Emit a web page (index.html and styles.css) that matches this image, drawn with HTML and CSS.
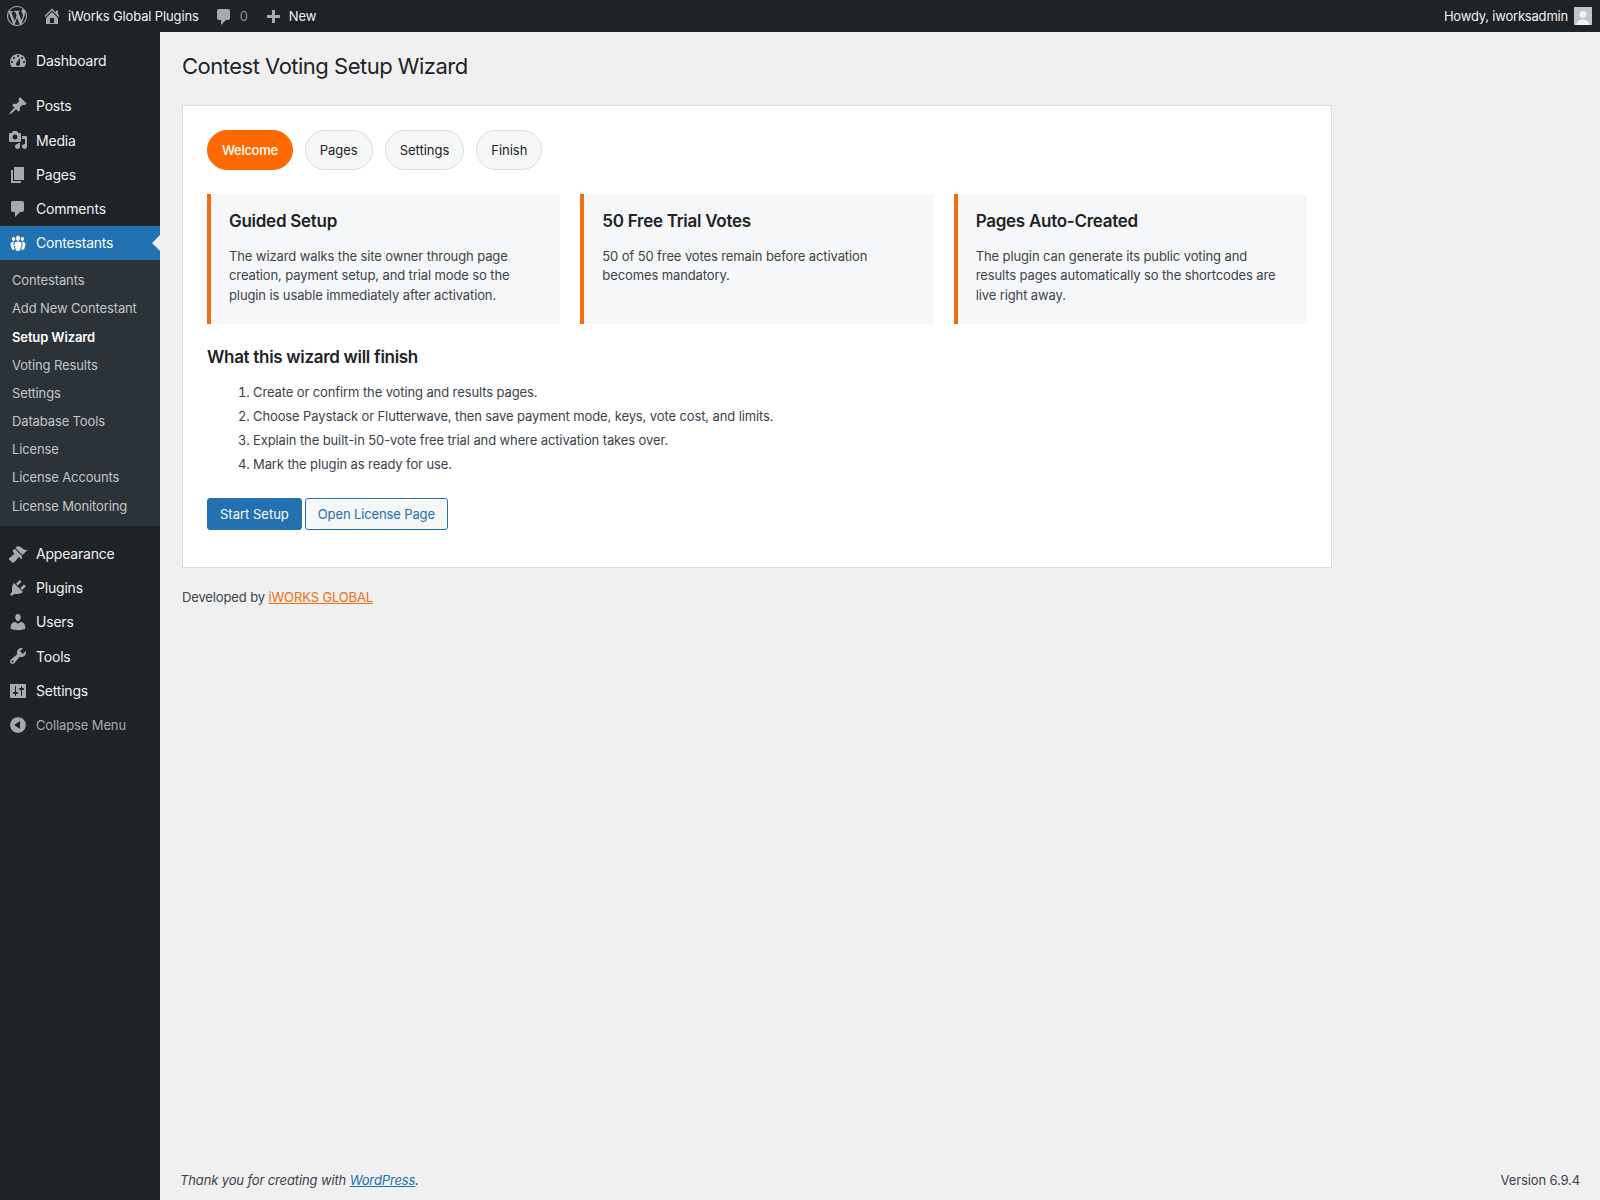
FILE: index.html
```html
<!DOCTYPE html>
<html lang="en">
<head>
<meta charset="utf-8">
<title>Contest Voting Setup Wizard</title>
<link rel="stylesheet" href="styles.css">
</head>
<body>
<header class="adminbar">
  <svg class="bar-logo" viewBox="0 0 20 20"><path fill-rule="evenodd" d="M20 10c0-5.51-4.49-10-10-10C4.48 0 0 4.49 0 10c0 5.52 4.48 10 10 10 5.51 0 10-4.48 10-10zM7.78 15.37L4.37 6.22c.55-.02 1.17-.08 1.17-.08.5-.06.44-1.13-.06-1.11 0 0-1.45.11-2.37.11-.18 0-.37 0-.58-.01C4.12 2.69 6.87 1.11 10 1.11c2.33 0 4.45.87 6.05 2.34-.68-.11-1.65.39-1.65 1.58 0 .74.45 1.36.9 2.1.35.61.55 1.36.55 2.46 0 1.49-1.4 5-1.4 5l-3.03-8.37c.54-.02.82-.17.82-.17.5-.05.44-1.25-.06-1.22 0 0-1.44.12-2.38.12-.87 0-2.33-.12-2.33-.12-.5-.03-.56 1.2-.06 1.22l.92.08 1.26 3.41zM17.41 10c.24-.64.74-1.87.43-4.25.7 1.29 1.05 2.71 1.05 4.25 0 3.29-1.73 6.24-4.4 7.78.97-2.59 1.94-5.2 2.92-7.78zM6.1 18.09C3.12 16.65 1.11 13.53 1.11 10c0-1.3.23-2.48.72-3.59C3.25 10.3 4.67 14.2 6.1 18.09zm4.03-6.63l2.58 6.98c-.86.29-1.76.45-2.71.45-.79 0-1.57-.11-2.29-.33.81-2.38 1.62-4.74 2.42-7.1z"/></svg>
  <svg class="bar-home" viewBox="0 0 20 20"><path fill-rule="evenodd" d="M16 8.5l1.53 1.53-1.06 1.06L10 4.62l-6.47 6.47-1.06-1.06L10 2.5l4 4v-2h2v4zm-6-2.46l6 5.99V18H4v-5.97zM12 17v-5H8v5h4z"/></svg>
  <span class="bar-site">iWorks Global Plugins</span>
  <svg class="bar-comment" viewBox="0 0 20 20"><path d="M5 2h9c1.1 0 2 .9 2 2v7c0 1.1-.9 2-2 2h-2l-5 5v-5H5c-1.100 0-2-.9-2-2V4c0-1.100.9-2 2-2z"/></svg>
  <span class="bar-count">0</span>
  <svg class="bar-plus" viewBox="0 0 20 20"><path d="M17 7v3h-5v5H9v-5H4V7h5V2h3v5h5z"/></svg>
  <span class="bar-new">New</span>
  <span class="bar-howdy">Howdy, iworksadmin</span>
  <span class="avatar"><svg viewBox="0 0 18 18"><rect width="18" height="18" fill="#c4c5c7"/><circle cx="9" cy="7.500" r="3.400" fill="#f3f3f3"/><path d="M2.500 18c.4-4 3-5.500 6.500-5.500s6.100 1.500 6.500 5.500z" fill="#f3f3f3"/></svg></span>
</header>

<div class="shell">
  <nav class="sidemenu">
    <ul class="menu">
      <li class="item"><svg class="mi" viewBox="0 0 20 20"><path fill-rule="evenodd" d="M3.760 16h12.480c1.100-1.370 1.760-3.110 1.760-5 0-4.420-3.580-8-8-8s-8 3.580-8 8c0 1.890.66 3.630 1.760 5zM10 4c.55 0 1 .45 1 1s-.45 1-1 1-1-.45-1-1 .45-1 1-1zM6 6c.55 0 1 .45 1 1s-.45 1-1 1-1-.45-1-1 .45-1 1-1zm8 0c.55 0 1 .45 1 1s-.45 1-1 1-1-.45-1-1 .45-1 1-1zm-5.370 5.550L12 7v6c0 1.100-.9 2-2 2s-2-.9-2-2c0-.57.24-1.080.63-1.450zM4 10c.55 0 1 .45 1 1s-.45 1-1 1-1-.45-1-1 .45-1 1-1zm12 0c.55 0 1 .45 1 1s-.45 1-1 1-1-.45-1-1 .45-1 1-1z"/></svg><span>Dashboard</span></li>
      <li class="sep"></li>
      <li class="item"><svg class="mi" viewBox="0 0 20 20"><path d="M10.440 3.020l1.820-1.820 6.360 6.350-1.830 1.820c-1.050-.68-2.480-.57-3.410.36l-.75.75c-.92.93-1.040 2.350-.35 3.410l-1.830 1.820-2.410-2.410-2.800 2.790c-.42.42-3.380 2.710-3.800 2.290s1.860-3.390 2.280-3.810l2.790-2.790L4.100 9.360l1.830-1.820c1.050.69 2.480.57 3.400-.36l.75-.75c.93-.92 1.050-2.350.36-3.410z"/></svg><span>Posts</span></li>
      <li class="item"><svg class="mi" viewBox="0 0 20 20"><path fill-rule="evenodd" d="M13 11V4c0-.55-.45-1-1-1h-1.670L9 1H5L3.670 3H2c-.55 0-1 .45-1 1v7c0 .55.45 1 1 1h10c.55 0 1-.45 1-1zM7 4.500c1.380 0 2.500 1.120 2.500 2.500S8.380 9.500 7 9.500 4.500 8.380 4.500 7 5.620 4.500 7 4.500zM14 6h5v10.500c0 1.380-1.120 2.500-2.500 2.500S14 17.880 14 16.500s1.120-2.500 2.500-2.500c.17 0 .34.02.5.05V9h-3V6zm-4 8.050V13h2v3.500c0 1.380-1.120 2.500-2.500 2.500S7 17.880 7 16.500 8.120 14 9.500 14c.17 0 .34.02.5.05z"/></svg><span>Media</span></li>
      <li class="item"><svg class="mi" viewBox="0 0 20 20"><path d="M6 15V2h10v13H6zm-1 1h8v2H3V5h2v11z"/></svg><span>Pages</span></li>
      <li class="item"><svg class="mi" viewBox="0 0 20 20"><path d="M5 2h9c1.100 0 2 .9 2 2v7c0 1.100-.9 2-2 2h-2l-5 5v-5H5c-1.100 0-2-.9-2-2V4c0-1.100.9-2 2-2z"/></svg><span>Comments</span></li>
      <li class="item current"><svg class="mi" viewBox="0 0 20 20"><path d="M8.030 4.460c-.29 1.280.55 3.460 1.970 3.460 1.410 0 2.250-2.180 1.960-3.460-.22-.98-1.080-1.630-1.960-1.630-.89 0-1.740.65-1.970 1.630zm-4.130.9c-.25 1.080.47 2.930 1.670 2.930s1.920-1.850 1.670-2.930c-.19-.83-.92-1.390-1.670-1.390s-1.480.56-1.670 1.390zm8.860 0c-.25 1.080.47 2.930 1.660 2.930 1.200 0 1.920-1.850 1.670-2.930-.19-.83-.92-1.390-1.670-1.390-.74 0-1.470.56-1.660 1.390zm-.59 11.430l1.250-4.300C14.200 10 12.710 8.470 10 8.470c-2.720 0-4.210 1.530-3.440 4.020l1.260 4.300C8.050 17.510 9 18 10 18c.98 0 1.940-.49 2.170-1.210zm-6.100-7.630c-.49.67-.96 1.830-.42 3.590l1.120 3.790c-.34.2-.77.31-1.200.31-.85 0-1.650-.41-1.850-1.030l-1.070-3.650c-.65-2.110.61-3.400 2.920-3.400.27 0 .54.02.79.06-.1.1-.2.22-.29.33zm8.350-.39c2.310 0 3.580 1.290 2.920 3.400l-1.070 3.650c-.2.62-1 1.030-1.850 1.030-.43 0-.86-.11-1.200-.31l1.110-3.770c.55-1.780.08-2.940-.42-3.610-.08-.11-.18-.23-.28-.33.25-.04.51-.06.79-.06z"/></svg><span>Contestants</span></li>
      <li class="submenu">
        <a>Contestants</a>
        <a>Add New Contestant</a>
        <a class="on">Setup Wizard</a>
        <a>Voting Results</a>
        <a>Settings</a>
        <a>Database Tools</a>
        <a>License</a>
        <a>License Accounts</a>
        <a>License Monitoring</a>
      </li>
      <li class="sep"></li>
      <li class="item"><svg class="mi" viewBox="0 0 20 20"><path d="M14.480 11.060L7.410 3.990l1.500-1.500c.5-.56 2.300-.47 3.510.32 1.210.8 1.430 1.280 2.910 2.100 1.180.64 2.450 1.260 4.450.85zm-.71.71L6.700 4.700 4.930 6.470c-.39.39-.39 1.020 0 1.410l1.060 1.060c.39.39.39 1.030 0 1.420-.6.6-1.430 1.110-2.210 1.690-.35.26-.7.53-1.010.84C1.430 13.230.4 14.800 1.010 15.410l3.170 3.170c.61.61 2.170-.41 3.520-1.760.31-.31.58-.66.84-1.010.58-.78 1.090-1.610 1.690-2.210.39-.39 1.020-.39 1.410 0l1.060 1.060c.39.39 1.020.39 1.410 0z"/></svg><span>Appearance</span></li>
      <li class="item"><svg class="mi" viewBox="0 0 20 20"><path d="M13.110 4.360L9.870 7.600 8 5.730l3.240-3.240c.35-.34 1.050-.2 1.560.32.52.51.66 1.210.31 1.550zm-8 1.770l.91-1.120 9.010 9.010-1.190.84c-.71.71-2.630 1.160-3.820 1.160H6.140L4.900 17.260c-.59.59-1.540.59-2.120 0-.59-.58-.59-1.530 0-2.120l1.240-1.240v-3.880c0-1.130.4-3.190 1.090-3.890zm7.260 3.970l3.240-3.240c.34-.35 1.040-.21 1.550.31.52.51.66 1.210.31 1.550l-3.240 3.250z"/></svg><span>Plugins</span></li>
      <li class="item"><svg class="mi" viewBox="0 0 20 20"><path d="M10 9.250c-2.270 0-2.730-3.440-2.730-3.440C7 4.020 7.820 2 9.970 2c2.160 0 2.980 2.020 2.710 3.810 0 0-.41 3.440-2.680 3.440zm0 2.570L12.720 10c2.390 0 4.520 2.330 4.520 4.530v2.490s-3.650 1.130-7.240 1.130c-3.650 0-7.240-1.130-7.240-1.130v-2.490c0-2.250 1.940-4.480 4.470-4.480z"/></svg><span>Users</span></li>
      <li class="item"><svg class="mi" viewBox="0 0 20 20"><path fill-rule="evenodd" d="M16.680 9.770c-1.340 1.340-3.300 1.670-4.950.99l-5.410 6.520c-.99.99-2.590.99-3.580 0s-.99-2.590 0-3.570l6.520-5.420c-.68-1.650-.35-3.610.99-4.950 1.280-1.280 3.120-1.620 4.720-1.060l-2.890 2.890 2.820 2.820 2.860-2.870c.53 1.580.18 3.390-1.080 4.690zM3.810 16.210c.4.39 1.040.39 1.430 0 .4-.4.4-1.040 0-1.430-.39-.4-1.030-.4-1.430 0-.39.39-.39 1.030 0 1.430z"/></svg><span>Tools</span></li>
      <li class="item"><svg class="mi" viewBox="0 0 20 20"><path fill-rule="evenodd" d="M18 16V4c0-.55-.45-1-1-1H3c-.55 0-1 .45-1 1v12c0 .55.45 1 1 1h14c.55 0 1-.45 1-1zM8 11h1c.55 0 1 .45 1 1s-.45 1-1 1H8v1.500c0 .28-.22.5-.5.5s-.5-.22-.5-.5V13H6c-.55 0-1-.45-1-1s.45-1 1-1h1V5.500c0-.28.22-.5.5-.5s.5.22.5.5V11zm5-2h-1c-.55 0-1-.45-1-1s.45-1 1-1h1V5.500c0-.28.22-.5.5-.5s.5.22.5.5V7h1c.55 0 1 .45 1 1s-.45 1-1 1h-1v5.500c0 .28-.22.5-.5.5s-.5-.22-.5-.5V9z"/></svg><span>Settings</span></li>
      <li class="item collapse"><svg class="mi" viewBox="0 0 20 20"><path fill-rule="evenodd" d="M10 2.160c4.330 0 7.840 3.510 7.840 7.840s-3.510 7.840-7.840 7.840S2.160 14.330 2.160 10 5.710 2.160 10 2.160zm2 11.720V6.120L6.180 9.970z"/></svg><span>Collapse Menu</span></li>
    </ul>
  </nav>

  <main class="content">
    <div class="wrap">
      <h1 class="title">Contest Voting Setup Wizard</h1>
      <section class="panel">
        <div class="steps">
          <span class="step active">Welcome</span>
          <span class="step">Pages</span>
          <span class="step">Settings</span>
          <span class="step">Finish</span>
        </div>
        <div class="cards">
          <article class="card">
            <h3>Guided Setup</h3>
            <p>The wizard walks the site owner through page creation, payment setup, and trial mode so the plugin is usable immediately after activation.</p>
          </article>
          <article class="card">
            <h3>50 Free Trial Votes</h3>
            <p>50 of 50 free votes remain before activation becomes mandatory.</p>
          </article>
          <article class="card">
            <h3>Pages Auto-Created</h3>
            <p>The plugin can generate its public voting and results pages automatically so the shortcodes are live right away.</p>
          </article>
        </div>
        <h2 class="sub">What this wizard will finish</h2>
        <ol class="list">
          <li>Create or confirm the voting and results pages.</li>
          <li>Choose Paystack or Flutterwave, then save payment mode, keys, vote cost, and limits.</li>
          <li>Explain the built-in 50-vote free trial and where activation takes over.</li>
          <li>Mark the plugin as ready for use.</li>
        </ol>
        <div class="actions">
          <a class="btn primary">Start Setup</a>
          <a class="btn secondary">Open License Page</a>
        </div>
      </section>
      <p class="dev">Developed by <a href="#">iWORKS GLOBAL</a></p>
    </div>
    <footer class="foot">
      <em>Thank you for creating with <a href="#">WordPress</a>.</em>
      <span>Version 6.9.4</span>
    </footer>
  </main>
</div>
</body>
</html>
```
FILE: styles.css
```css
* { box-sizing: border-box; }
html, body { margin: 0; padding: 0; }
body {
  height: 1200px;
  overflow: hidden;
  display: flex;
  flex-direction: column;
  background: #f0f0f1;
  color: #3c434a;
  font-family: Inter, "Liberation Sans", sans-serif;
  font-size: 13px;
  line-height: 1.4;
  letter-spacing: -0.11px;
}
svg { display: block; fill: currentColor; flex: none; }

.adminbar {
  height: 32px;
  flex: none;
  display: flex;
  align-items: center;
  background: #1d2327;
  color: #f0f0f1;
  padding-right: 8px;
}
.adminbar svg { color: #a7aaad; }
.bar-logo { width: 20px; height: 20px; margin-left: 7px; }
.bar-home { width: 20px; height: 20px; margin-left: 15px; }
.bar-site { margin-left: 6px; letter-spacing: -0.13px; }
.bar-comment { width: 20px; height: 20px; margin: 2px 0 0 15px; }
.bar-count { margin-left: 6px; color: #8c8f94; }
.bar-plus { width: 20px; height: 20px; margin: 4px 0 0 15px; }
.bar-new { margin-left: 6px; letter-spacing: -0.13px; }
.bar-howdy { margin-left: auto; letter-spacing: -0.2px; }
.avatar { width: 18px; height: 18px; margin-left: 6px; }

.shell { flex: 1; display: flex; min-height: 0; }

.sidemenu { width: 160px; flex: none; background: #1d2327; padding-top: 12px; }
.menu { list-style: none; margin: 0; padding: 0; }
.item {
  position: relative;
  display: flex;
  align-items: center;
  height: 34.200px;
  color: #f0f0f1;
  font-size: 14px;
  letter-spacing: -0.2px;
}
.item span { margin-left: 8px; }
.mi { width: 20px; height: 20px; margin-left: 8px; color: #a7aaad; }
.sep { height: 11px; }
.item.current { background: #2271b1; color: #fff; }
.item.current .mi { color: #fff; }
.item.current::after {
  content: "";
  position: absolute;
  right: 0;
  top: 50%;
  margin-top: -8px;
  border: 8px solid transparent;
  border-right-color: #f0f0f1;
  border-left-width: 0;
}
.item.collapse { color: #a7aaad; font-size: 13px; letter-spacing: -0.13px; }
.submenu { background: #2c3338; padding: 6px 0; letter-spacing: -0.13px; }
.submenu a {
  display: block;
  padding: 5px 12px;
  color: #c3c4c7;
  font-size: 13px;
  line-height: 1.400;
}
.submenu a.on { color: #fff; font-weight: 600; }

.content { flex: 1; min-width: 0; display: flex; flex-direction: column; padding-left: 20px; }
.wrap { margin: 10px 20px 0 2px; max-width: 1150px; }
.title {
  margin: 0;
  padding: 10px 0 4px;
  font-size: 22px;
  font-weight: 400;
  line-height: 1.300;
  letter-spacing: -0.5px;
  color: #1d2327;
}

.panel {
  margin-top: 20px;
  background: #fff;
  border: 1px solid #dcdcde;
  padding: 24px 24px 37px;
}
.steps { display: flex; gap: 12px; }
.step {
  display: flex;
  align-items: center;
  height: 40px;
  padding: 0 14px;
  border: 1px solid #dcdcde;
  border-radius: 999px;
  background: #f6f7f7;
  color: #1d2327;
  letter-spacing: -0.02px;
}
.step.active { background: #ff6a00; border-color: #ff6a00; color: #fff; font-weight: 500; letter-spacing: -0.3px; }

.cards { display: grid; grid-template-columns: repeat(3, 1fr); gap: 20px; margin-top: 24px; }
.card {
  height: 130px;
  padding: 16px 18px;
  background: #f6f7f9;
  border-left: 4px solid #f26d0f;
}
.card h3 { margin: 0 0 15px; font-size: 17px; font-weight: 600; line-height: 1.300; letter-spacing: -0.27px; color: #1d2327; }
.card p { margin: 0; font-size: 13px; line-height: 1.500; color: #3c434a; }

.sub { margin: 22px 0 0; font-size: 17px; font-weight: 600; line-height: 1.300; letter-spacing: -0.3px; color: #1d2327; }
.list { margin: 15px 0 0; padding: 0 0 0 46px; }
.list li { margin-bottom: 6px; }

.actions { display: flex; gap: 3px; margin-top: 25px; }
.btn {
  display: flex;
  align-items: center;
  height: 32px;
  padding: 0 12px;
  border: 1px solid #2271b1;
  border-radius: 3px;
  letter-spacing: 0;
}
.primary { background: #2271b1; color: #fff; }
.secondary { background: #f6f7f7; color: #2271b1; letter-spacing: -0.13px; }

.dev { margin: 20px 0 0; letter-spacing: -0.13px; }
.dev a { color: #f26d0f; }

.foot {
  margin-top: auto;
  display: flex;
  justify-content: space-between;
  padding: 0 20px 11px 0;
  letter-spacing: -0.13px;
}
.foot a { color: #2271b1; }
```
